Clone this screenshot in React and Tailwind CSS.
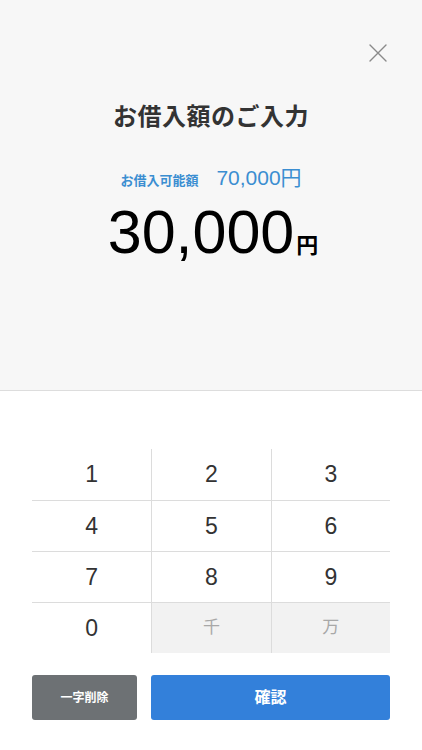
import React from 'react';

const FONT = { fontFamily: '"Liberation Sans", "Noto Sans CJK JP", sans-serif' };

const KEYS = [
  ['1', '2', '3'],
  ['4', '5', '6'],
  ['7', '8', '9'],
  ['0', '千', '万'],
];

function CloseIcon() {
  return (
    <svg width="20" height="20" viewBox="0 0 20 20" fill="none" stroke="#8a8a8a" strokeWidth="1.4" strokeLinecap="round">
      <path d="M2 2 L18 18 M18 2 L2 18" />
    </svg>
  );
}

function Key({ label, row, col }) {
  const unit = label === '千' || label === '万';
  const borders = [
    row > 0 ? 'border-t' : '',
    col > 0 ? 'border-l' : '',
  ].join(' ');
  return (
    <button
      className={`h-[51px] flex items-center justify-center border-[#dcdcdc] ${borders} ${
        unit ? 'bg-[#f2f2f2] text-[#a8a8a8] text-[17px]' : 'bg-white text-[#333333] text-[23px]'
      }`}
    >
      {label}
    </button>
  );
}

export default function App() {
  return (
    <div className="w-[422px] h-[750px] bg-white flex flex-col" style={FONT}>
      <div className="h-[391px] bg-[#f7f7f7] border-b border-[#dddddd] flex flex-col">
        <div className="flex justify-end pr-[34px] pt-[43px]">
          <CloseIcon />
        </div>
        <h1 className="mt-[38px] text-center text-[24px] leading-[32px] font-bold text-[#333333] tracking-[0.5px]">
          お借入額のご入力
        </h1>
        <div className="mt-[29px] flex items-baseline justify-center gap-[18px] text-[#3b8ed1]">
          <span className="text-[13px] font-bold">お借入可能額</span>
          <span className="text-[21px]">70,000円</span>
        </div>
        <div className="mt-[4px] flex items-baseline justify-center text-black pl-[4px]">
          <span className="text-[61px] leading-[68px]">30,000</span>
          <span className="text-[22px] font-bold ml-[2px]">円</span>
        </div>
      </div>

      <div className="mt-[58px] mx-[32px] grid grid-cols-3">
        {KEYS.map((r, ri) =>
          r.map((k, ci) => <Key key={k} label={k} row={ri} col={ci} />)
        )}
      </div>

      <div className="mt-[22px] mx-[32px] flex gap-[14px]">
        <button className="w-[105px] h-[45px] rounded-[3px] bg-[#6d7174] text-white text-[12px] font-bold">
          一字削除
        </button>
        <button className="flex-1 h-[45px] rounded-[3px] bg-[#3380da] text-white text-[16px] font-bold">
          確認
        </button>
      </div>
    </div>
  );
}
